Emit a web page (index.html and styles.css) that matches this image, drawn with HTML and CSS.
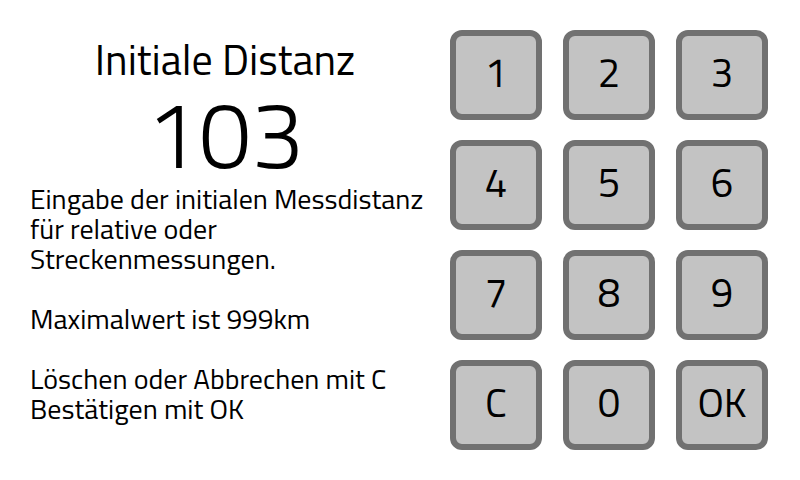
FILE: index.html
```html
<!DOCTYPE html>
<html lang="de">

<head>
  <meta charset="UTF-8">
  <meta name="viewport" content="width=device-width, initial-scale=1.0">
  <title>Initiale Distanz</title>
  <link rel="stylesheet" href="styles.css">
</head>

<body>
  <div class="screen">
    <div class="info">
      <h1>Initiale Distanz</h1>
      <div class="value">103</div>
      <p class="hint">
        Eingabe der initialen Messdistanz<br>
        für relative oder<br>
        Streckenmessungen.<br>
        <br>
        Maximalwert ist 999km<br>
        <br>
        Löschen oder Abbrechen mit C<br>
        Bestätigen mit OK
      </p>
    </div>

    <div class="keypad">
      <button class="key">1</button>
      <button class="key">2</button>
      <button class="key">3</button>
      <button class="key">4</button>
      <button class="key">5</button>
      <button class="key">6</button>
      <button class="key">7</button>
      <button class="key">8</button>
      <button class="key">9</button>
      <button class="key">C</button>
      <button class="key">0</button>
      <button class="key">OK</button>
    </div>
  </div>
</body>

</html>
```

FILE: styles.css
```css
:root {
  --key-fill: #c3c3c3;
  --key-border: #717171;
  --text-color: #000;
}

* {
  margin: 0;
  padding: 0;
  box-sizing: border-box;
}

body {
  font-family: 'Titillium Web', Roboto, sans-serif;
  background: #fff;
  color: var(--text-color);
  width: 800px;
  height: 480px;
  overflow: hidden;
}

.screen {
  display: flex;
  height: 100%;
}

.info {
  width: 450px;
  padding-top: 36px;
}

h1 {
  font-size: 42px;
  font-weight: 400;
  line-height: 46px;
  text-align: center;
}

.value {
  margin-top: 11px;
  font-size: 94px;
  font-weight: 300;
  line-height: 80px;
  text-align: center;
}

.hint {
  margin-top: 11px;
  padding-left: 30px;
  font-size: 28px;
  line-height: 30px;
}

.keypad {
  display: grid;
  grid-template-columns: repeat(3, 92px);
  grid-auto-rows: 90px;
  column-gap: 21px;
  row-gap: 20px;
  padding-top: 30px;
}

.key {
  background: var(--key-fill);
  border: 6px solid var(--key-border);
  border-radius: 12px;
  padding-bottom: 6px;
  font-family: inherit;
  font-size: 40px;
  color: var(--text-color);
  cursor: pointer;
}

.key:active {
  background: #a9a9a9;
}
```
